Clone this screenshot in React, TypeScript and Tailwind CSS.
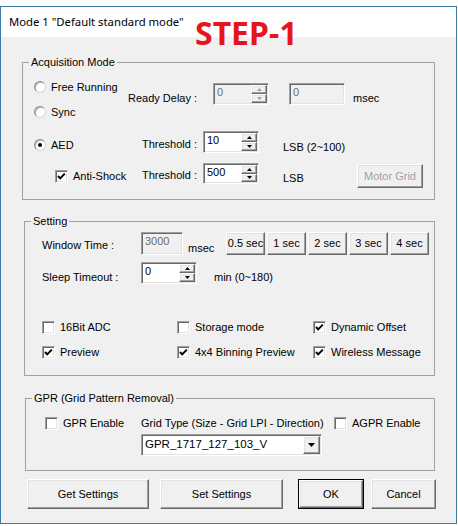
import React from "react";

const sunken =
  "border-t border-l border-b border-r border-t-[#a0a0a0] border-l-[#a0a0a0] border-b-white border-r-white shadow-[inset_1px_1px_0_#696969,inset_-1px_-1px_0_#e3e3e3]";
const raised =
  "border-t border-l border-b border-r border-t-white border-l-white border-b-[#696969] border-r-[#696969] shadow-[inset_-1px_-1px_0_#a0a0a0,inset_1px_1px_0_#e3e3e3] bg-[#f0f0f0]";

function Arrow({ dir, disabled }: { dir: "up" | "down"; disabled?: boolean }) {
  const fill = disabled ? "#a0a0a0" : "#000";
  return (
    <svg width="5" height="3" viewBox="0 0 5 3">
      {dir === "up" ? (
        <polygon points="2.5,0 5,3 0,3" fill={fill} />
      ) : (
        <polygon points="0,0 5,0 2.5,3" fill={fill} />
      )}
    </svg>
  );
}

function Spin({
  value,
  disabled,
  h = "h-[22px]",
}: {
  value: string;
  disabled?: boolean;
  h?: string;
}) {
  return (
    <div
      className={`flex w-[56px] ${h} shrink-0 ${sunken} ${
        disabled ? "bg-[#f0f0f0] text-[#6d6d6d]" : "bg-white"
      }`}
    >
      <div className="flex-1 pl-[3px] pt-[2px] leading-[13px]">{value}</div>
      <div className="flex w-[17px] flex-col py-[1px] pr-[1px]">
        <div className={`flex flex-1 items-center justify-center ${raised}`}>
          <Arrow dir="up" disabled={disabled} />
        </div>
        <div className={`flex flex-1 items-center justify-center ${raised}`}>
          <Arrow dir="down" disabled={disabled} />
        </div>
      </div>
    </div>
  );
}

function Edit({ value, w, h }: { value: string; w: string; h: string }) {
  return (
    <div
      className={`${w} ${h} shrink-0 ${sunken} bg-[#f0f0f0] pl-[3px] pt-[2px] leading-[13px] text-[#6d6d6d]`}
    >
      {value}
    </div>
  );
}

function Radio({
  label,
  checked,
  w,
  className = "",
}: {
  label: string;
  checked?: boolean;
  w?: string;
  className?: string;
}) {
  return (
    <div className={`flex h-[14px] shrink-0 items-center ${w ?? ""} ${className}`}>
      <span className="flex h-[12px] w-[12px] shrink-0 items-center justify-center rounded-full border border-t-[#8a8a8a] border-l-[#8a8a8a] border-b-[#d6d6d6] border-r-[#d6d6d6] bg-white shadow-[inset_1px_1px_0_#b8b8b8]">
        {checked && <span className="h-[4px] w-[4px] rounded-full bg-black" />}
      </span>
      <span className="ml-[5px] leading-[13px]">{label}</span>
    </div>
  );
}

function Check({
  label,
  checked,
  w,
  className = "",
}: {
  label: string;
  checked?: boolean;
  w?: string;
  className?: string;
}) {
  return (
    <div className={`flex h-[14px] shrink-0 items-center ${w ?? ""} ${className}`}>
      <span
        className={`flex h-[13px] w-[13px] shrink-0 items-center justify-center bg-white ${sunken}`}
      >
        {checked && (
          <svg width="9" height="9" viewBox="0 0 9 9">
            <polyline
              points="1,4 3.2,6.4 7.8,1.6"
              fill="none"
              stroke="#000"
              strokeWidth="2"
            />
          </svg>
        )}
      </span>
      <span className="ml-[5px] leading-[13px]">{label}</span>
    </div>
  );
}

function Btn({
  label,
  w,
  h,
  disabled,
  isDefault,
}: {
  label: string;
  w: string;
  h: string;
  disabled?: boolean;
  isDefault?: boolean;
}) {
  const inner = (
    <div
      className={`flex h-full w-full items-center justify-center ${raised} ${
        disabled ? "text-[#a0a0a0]" : "text-black"
      }`}
    >
      {label}
    </div>
  );
  if (isDefault) {
    return (
      <div className={`${w} ${h} shrink-0 border border-black`}>{inner}</div>
    );
  }
  return <div className={`${w} ${h} shrink-0`}>{inner}</div>;
}

function Group({
  title,
  className,
  children,
}: {
  title: string;
  className: string;
  children: React.ReactNode;
}) {
  return (
    <fieldset className={`m-0 min-w-0 border border-[#a0a0a0] p-0 ${className}`}>
      <legend className="ml-[6px] px-[2px] text-[11px] leading-[13px]">
        {title}
      </legend>
      {children}
    </fieldset>
  );
}

export default function App() {
  return (
    <div className="relative h-[526px] w-[458px] overflow-hidden bg-white font-['Liberation_Sans',Arial,sans-serif] text-[11px] text-black">
      <div className="mt-[6px] flex h-[518px] w-[457px] flex-col border border-[#3a7ca5]">
        {/* title bar */}
        <div className="flex h-[30px] shrink-0 items-center bg-white pl-[8px] font-['Noto_Sans',sans-serif] text-[11.3px]">
          Mode 1 "Default standard mode"
        </div>
        {/* body */}
        <div className="flex flex-1 flex-col bg-[#f0f0f0]">
          {/* Acquisition Mode */}
          <Group title="Acquisition Mode" className="ml-[21px] mt-[19px] w-[413px]">
            <div className="pb-[11px] pl-[11px] pr-[11px] pt-[11px]">
              <div className="flex h-[39px] items-start">
                <div className="flex w-[94px] flex-col">
                  <Radio label="Free Running" />
                  <Radio label="Sync" className="mt-[11px]" />
                </div>
                <div className="mt-[12px] w-[85px] leading-[13px]">Ready Delay :</div>
                <div className="mt-[3px]">
                  <Spin value="0" disabled />
                </div>
                <div className="ml-[20px] mt-[3px]">
                  <Edit value="0" w="w-[56px]" h="h-[22px]" />
                </div>
                <div className="ml-[8px] mt-[12px] leading-[13px]">msec</div>
              </div>
              <div className="mt-[12px] flex h-[22px] items-start">
                <Radio label="AED" checked w="w-[108px]" className="mt-[7px]" />
                <div className="mt-[7px] w-[61px] leading-[13px]">Threshold :</div>
                <Spin value="10" />
                <div className="ml-[24px] mt-[10px] leading-[13px]">LSB (2~100)</div>
              </div>
              <div className="mt-[10px] flex h-[25px] items-start">
                <Check label="Anti-Shock" checked w="w-[87px]" className="ml-[21px] mt-[6px]" />
                <div className="mt-[6px] w-[61px] leading-[13px]">Threshold :</div>
                <Spin value="500" h="h-[21px]" />
                <div className="ml-[24px] mt-[9px] leading-[13px]">LSB</div>
                <div className="ml-auto mt-[1px]">
                  <Btn label="Motor Grid" w="w-[66px]" h="h-[24px]" disabled />
                </div>
              </div>
            </div>
          </Group>

          {/* Setting */}
          <Group title="Setting" className="ml-[23px] mt-[15px] w-[411px]">
            <div className="pb-[16px] pl-[17px] pr-[5px] pt-[4px]">
              <div className="flex h-[23px] items-start">
                <div className="mt-[7px] w-[99px] leading-[13px]">Window Time :</div>
                <Edit value="3000" w="w-[42px]" h="h-[23px]" />
                <div className="ml-[5px] mt-[10px] leading-[13px]">msec</div>
                <div className="ml-auto flex gap-[2px]">
                  <Btn label="0.5 sec" w="w-[39px]" h="h-[23px]" />
                  <Btn label="1 sec" w="w-[39px]" h="h-[23px]" />
                  <Btn label="2 sec" w="w-[39px]" h="h-[23px]" />
                  <Btn label="3 sec" w="w-[39px]" h="h-[23px]" />
                  <Btn label="4 sec" w="w-[39px]" h="h-[23px]" />
                </div>
              </div>
              <div className="mt-[7px] flex h-[22px] items-start">
                <div className="mt-[9px] w-[99px] leading-[13px]">Sleep Timeout :</div>
                <Spin value="0" />
                <div className="ml-[17px] mt-[9px] leading-[13px]">min (0~180)</div>
              </div>
              <div className="mt-[36px] flex">
                <Check label="16Bit ADC" w="w-[135px]" />
                <Check label="Storage mode" w="w-[136px]" />
                <Check label="Dynamic Offset" checked />
              </div>
              <div className="mt-[11px] flex">
                <Check label="Preview" checked w="w-[135px]" />
                <Check label="4x4 Binning Preview" checked w="w-[136px]" />
                <Check label="Wireless Message" checked />
              </div>
            </div>
          </Group>

          {/* GPR */}
          <Group title="GPR (Grid Pattern Removal)" className="ml-[24px] mt-[16px] w-[410px]">
            <div className="pb-[14px] pl-[19px] pt-[11px]">
              <div className="flex h-[14px] items-center">
                <Check label="GPR Enable" w="w-[96px]" />
                <div className="w-[193px] leading-[13px]">
                  Grid Type (Size - Grid LPI - Direction)
                </div>
                <Check label="AGPR Enable" />
              </div>
              <div
                className={`ml-[96px] mt-[4px] flex h-[22px] w-[181px] bg-white ${sunken}`}
              >
                <div className="flex-1 pl-[3px] pt-[3px] text-[11.5px] leading-[13px]">
                  GPR_1717_127_103_V
                </div>
                <div className="py-[1px] pr-[1px]">
                  <div className={`flex h-full w-[17px] items-center justify-center ${raised}`}>
                    <svg width="7" height="4" viewBox="0 0 7 4">
                      <polygon points="0,0 7,0 3.5,4" fill="#000" />
                    </svg>
                  </div>
                </div>
              </div>
            </div>
          </Group>

          {/* bottom buttons */}
          <div className="ml-[26px] mt-[8px] flex">
            <Btn label="Get Settings" w="w-[122px]" h="h-[30px]" />
            <div className="ml-[11px]">
              <Btn label="Set Settings" w="w-[123px]" h="h-[30px]" />
            </div>
            <div className="ml-[15px]">
              <Btn label="OK" w="w-[66px]" h="h-[30px]" isDefault />
            </div>
            <div className="ml-[7px]">
              <Btn label="Cancel" w="w-[65px]" h="h-[30px]" />
            </div>
          </div>
        </div>
      </div>
      <div className="absolute left-[195px] top-[17px] font-['Noto_Sans',sans-serif] text-[32px] font-bold leading-none text-[#e8141c]">
        STEP-1
      </div>
    </div>
  );
}
